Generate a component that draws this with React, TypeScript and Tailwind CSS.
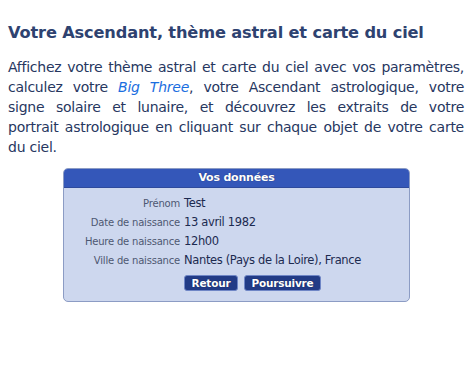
export default function App() {
  const rows = [
    { label: "Prénom", value: "Test" },
    { label: "Date de naissance", value: "13 avril 1982" },
    { label: "Heure de naissance", value: "12h00" },
    { label: "Ville de naissance", value: "Nantes (Pays de la Loire), France" },
  ];

  const line = "block text-justify [text-align-last:justify]";

  return (
    <div className="min-h-[375px] w-[475px] bg-white px-2 pt-[21px] font-['DejaVu_Sans',Verdana,sans-serif] text-[#26375f]">
      <h1 className="text-[16.2px] font-bold leading-[24px] tracking-[-0.15px] text-[#2e4270]">
        Votre Ascendant, thème astral et carte du ciel
      </h1>
      <p className="mt-[12px] w-[456px] text-[14px] leading-[20px] tracking-[-0.25px] text-[#27375f]">
        <span className={line}>Affichez votre thème astral et carte du ciel avec vos paramètres,</span>
        <span className={line}>
          calculez votre <a href="#" className="italic text-[#1a6ee0]">Big Three</a>, votre Ascendant astrologique, votre
        </span>
        <span className={line}>signe solaire et lunaire, et découvrez les extraits de votre</span>
        <span className={line}>portrait astrologique en cliquant sur chaque objet de votre carte</span>
        <span className="block">du ciel.</span>
      </p>

      <div className="ml-[55px] mt-[11px] w-[347px] overflow-hidden rounded-[5px] border border-[#8c9cc4] bg-[#cdd7ee]">
        <div className="h-[19px] border-b border-[#2e4a9c] bg-[#3457b9] text-center text-[11px] font-bold leading-[18px] tracking-[-0.2px] text-white [text-shadow:0_0_1px_#142560]">
          Vos données
        </div>
        <div className="flex flex-col pt-[6px] pb-[10px]">
          {rows.map((r) => (
            <div key={r.label} className="flex h-[19px] items-center gap-[4px]">
              <span className="w-[116px] text-right text-[10px] tracking-[-0.2px] text-[#4d5872]">{r.label}</span>
              <span className="text-[11.5px] tracking-[-0.35px] text-[#1c2a50]">{r.value}</span>
            </div>
          ))}
          <div className="mt-[5px] ml-[120px] flex gap-[6px]">
            <button className="h-[16px] w-[54px] rounded-[3px] border border-[#6f86c6] bg-[#223b86] text-[10.5px] font-bold leading-[14px] tracking-[-0.2px] text-white [text-shadow:0_0_1px_#0c1a48]">
              Retour
            </button>
            <button className="h-[16px] w-[77px] rounded-[3px] border border-[#6f86c6] bg-[#223b86] text-[10.5px] font-bold leading-[14px] tracking-[-0.2px] text-white [text-shadow:0_0_1px_#0c1a48]">
              Poursuivre
            </button>
          </div>
        </div>
      </div>
    </div>
  );
}
